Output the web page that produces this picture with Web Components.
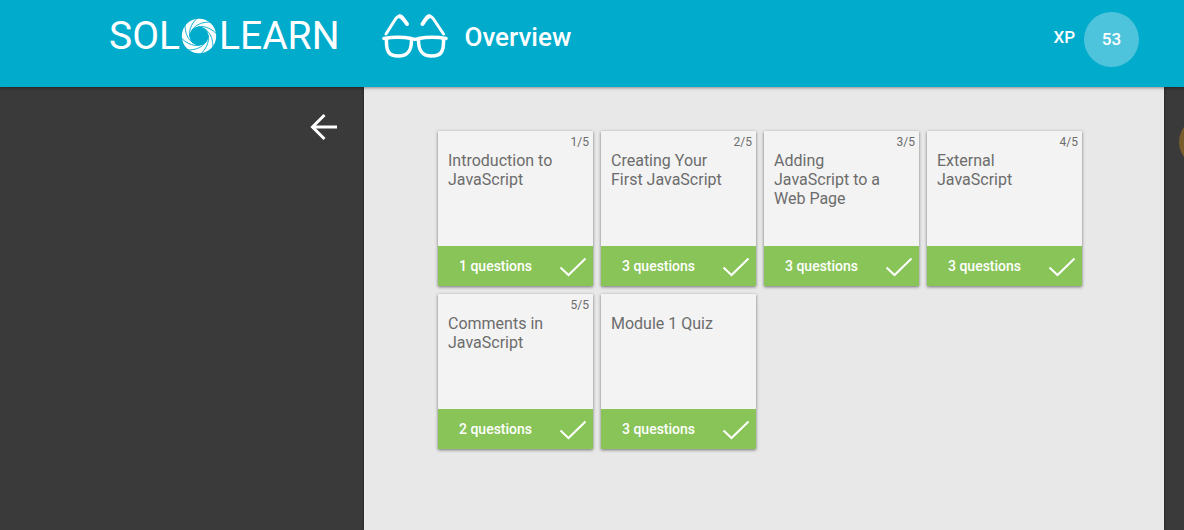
<!DOCTYPE html>
<html lang="en">
<head>
<meta charset="utf-8">
<meta name="viewport" content="width=device-width, initial-scale=1">
<title>SoloLearn - Overview</title>
<style>
  body { margin: 0; background: #3a3a3a; font-family: Roboto, "Liberation Sans", sans-serif; }
</style>
</head>
<body>
<course-page></course-page>
<script>
function define(name, html, setup) {
  const template = document.createElement("template");
  template.innerHTML = html;
  customElements.define(name, class extends HTMLElement {
    constructor() {
      super();
      this.attachShadow({ mode: "open" }).append(template.content.cloneNode(true));
    }
    connectedCallback() { if (setup) setup(this, this.shadowRoot); }
  });
}

define("brand-logo", `
  <style>
    :host { display: block; }
    a { display: flex; align-items: center; color: #fff; text-decoration: none;
        font-size: 39px; line-height: 48px; font-weight: 400; }
    svg { display: block; width: 36px; height: 36px; margin: 0 2px 0 1px; }
  </style>
  <a href="#" aria-label="SoloLearn"><span>SOL</span><svg viewBox="-18 -18 36 36" aria-hidden="true">
    <circle r="13.200" fill="none" stroke="#fff" stroke-width="8"/>
    <g id="swirl" fill="none" stroke="#00abcc" stroke-width=".9"></g></svg><span>LEARN</span></a>`,
  (host, root) => {
    const blades = 8;
    root.getElementById("swirl").innerHTML = Array.from({ length: blades }, (_, i) =>
      `<path transform="rotate(${i * 360 / blades})" d="M-9.300 1C-8.500-7-2-14 11-14"/>`).join("");
  });

define("glasses-icon", `
  <style>:host { display: block; } svg { display: block; width: 66px; height: 46px; }</style>
  <svg viewBox="0 0 66 46" fill="none" stroke="#fff" stroke-linecap="round" stroke-linejoin="round" aria-hidden="true">
    <path stroke-width="3" d="M4 21L13.500 6Q17.500 .500 20.500 4.500L22 7M61.500 21L51.500 6Q47.500 .500 44.500 4.500L43 7"/>
    <path stroke-width="4" d="M17.500 3.500Q20 3.500 25 11M47.500 3.500Q45 3.500 40.500 11"/>
    <path stroke-width="3.500" d="M2 25.500Q16 23 29.500 25.500Q33 27 36.500 25.500Q50 23 64 25.500"/>
    <path stroke-width="3.500" d="M4.500 26C4 39 7 43 16.500 43C25 43 29.500 39 29.500 27M61.500 26C62 39 59 43 49.500 43C41 43 36.500 39 36.500 27"/>
  </svg>`);

define("xp-score", `
  <style>
    :host { display: flex; align-items: center; gap: 9px; color: #fff; font-weight: 500; }
    .label { font-size: 17px; line-height: 20px; padding-bottom: 6px; }
    .value { display: grid; place-items: center; width: 55px; height: 53px; padding-bottom: 2px; border-radius: 50%;
             background: #4dc4db; font-size: 17px; }
  </style>
  <span class="label">XP</span><span class="value"><slot></slot></span>`);

define("top-bar", `
  <style>
    :host { display: block; position: relative; z-index: 1; background: #00abcc; box-shadow: 0 1px 3px rgba(0,0,0,.4); }
    header { display: flex; align-items: center; height: 71px; padding: 0 45px 16px 109px; }
    glasses-icon { margin-left: 43px; }
    h1 { flex: 1; margin: 0 0 0 16px; color: #fff; font-size: 26px; line-height: 30px; padding-top: 2px; font-weight: 500; }
    xp-score { padding-top: 8px; }
  </style>
  <header>
    <brand-logo></brand-logo>
    <glasses-icon></glasses-icon>
    <h1><slot></slot></h1>
    <xp-score>53</xp-score>
  </header>`);

define("side-panel", `
  <style>
    :host { display: flex; justify-content: flex-end; align-items: flex-start; padding: 24px 25px 0 0; box-sizing: border-box; }
    button { display: block; padding: 0; border: 0; background: none; cursor: pointer; }
    svg { display: block; width: 32px; height: 32px; }
  </style>
  <button type="button" aria-label="Back">
    <svg viewBox="0 0 32 32" fill="none" stroke="#fff" stroke-width="3" aria-hidden="true"><path d="M17.500 4L5.500 16L17.500 28M5 16H30"/></svg>
  </button>`);

define("lesson-card", `
  <style>
    :host { display: block; }
    article { display: flex; flex-direction: column; min-height: 155px; background: #f3f3f3; box-shadow: 0 1px 3px rgba(0,0,0,.5); }
    .step { height: 20px; padding: 0 4px; text-align: right; font-size: 12px; line-height: 22px; color: #6c6c6c; }
    h2 { flex: 1; margin: 0; padding: 0 24px 0 10px; font-size: 16px; line-height: 19px; font-weight: 400; color: #6c6c6c; }
    footer { display: flex; align-items: center; justify-content: space-between; height: 40px; padding: 0 6px 0 21px;
             background: #88c457; color: #fff; font-size: 14px; font-weight: 500; }
    svg { display: block; width: 28px; height: 20px; margin-top: 2px; }
  </style>
  <article>
    <div class="step"></div>
    <h2><slot></slot></h2>
    <footer><span class="count"></span><svg viewBox="0 0 28 20" fill="none" stroke="#fff" stroke-width="2" aria-hidden="true"><path d="M1.500 10.500L9.500 18L26.500 1.500"/></svg></footer>
  </article>`,
  (host, root) => {
    root.querySelector(".step").textContent = host.getAttribute("step") || "";
    root.querySelector(".count").textContent = host.getAttribute("questions") + " questions";
  });

define("lesson-grid", `
  <style>
    :host { display: grid; grid-template-columns: repeat(auto-fill, 155px); gap: 8px; }
  </style>
  <slot></slot>`);

define("reward-coin", `
  <style>
    :host { display: block; overflow: hidden; padding: 30px 0 0 15px; box-sizing: border-box; }
    svg { display: block; width: 50px; height: 50px; }
  </style>
  <svg viewBox="0 0 50 50" aria-hidden="true"><circle cx="25" cy="25" r="25" fill="#775d2b"/></svg>`);

define("course-page", `
  <style>
    :host { display: flex; flex-direction: column; min-height: 100vh; }
    .body { flex: 1; display: grid; grid-template-columns: 364px minmax(0, 1fr) 20px; }
    main { padding: 44px 74px; background: #e8e8e8; box-shadow: 0 0 3px rgba(0,0,0,.5); }
  </style>
  <top-bar>Overview</top-bar>
  <div class="body">
    <side-panel></side-panel>
    <main>
      <lesson-grid>
        <lesson-card step="1/5" questions="1">Introduction to JavaScript</lesson-card>
        <lesson-card step="2/5" questions="3">Creating Your First JavaScript</lesson-card>
        <lesson-card step="3/5" questions="3">Adding JavaScript to a Web Page</lesson-card>
        <lesson-card step="4/5" questions="3">External JavaScript</lesson-card>
        <lesson-card step="5/5" questions="2">Comments in JavaScript</lesson-card>
        <lesson-card questions="3">Module 1 Quiz</lesson-card>
      </lesson-grid>
    </main>
    <reward-coin></reward-coin>
  </div>`);
</script>
</body>
</html>
